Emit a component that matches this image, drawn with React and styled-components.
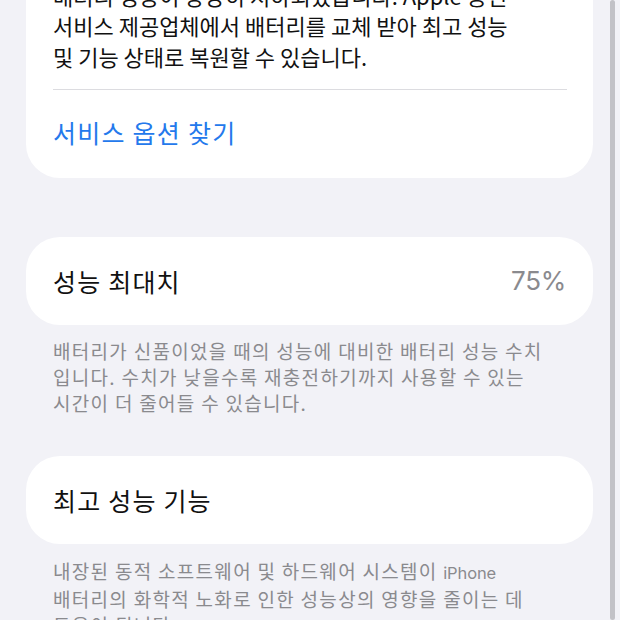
import React from "react";
import styled, { createGlobalStyle } from "styled-components";

const Global = createGlobalStyle`
  html, body {
    margin: 0;
    padding: 0;
    background: #f2f2f7;
    overflow: hidden;
  }
  body {
    font-family: "Noto Sans CJK KR", "Noto Sans", sans-serif;
    -webkit-font-smoothing: antialiased;
  }
`;

const Page = styled.div`
  position: relative;
  width: 620px;
  height: 620px;
  overflow: hidden;
`;

const Content = styled.div`
  display: flex;
  flex-direction: column;
  padding: 0 27px 0 26px;
  margin-top: -40px;
`;

const Card = styled.section`
  background: #ffffff;
  border-radius: 34px;
  display: flex;
  flex-direction: column;
  margin-top: ${(p) => p.$gap || 0}px;
`;

const CardText = styled.p`
  margin: 0;
  padding: 19.5px 26px 18.25px 27px;
  font-size: 22px;
  line-height: 30.5px;
  color: #111111;
  letter-spacing: 0;
`;

const Separator = styled.div`
  height: 1px;
  margin: 0 26px 0 27px;
  background: #dcdce0;
`;

const LinkRow = styled.div`
  height: 88px;
  display: flex;
  align-items: center;
  padding: 0 27px 4px 27px;
  box-sizing: border-box;
  font-size: 25px;
  letter-spacing: 1.25px;
  color: #2479ec;
`;

const Row = styled.div`
  height: 88px;
  display: flex;
  align-items: center;
  justify-content: space-between;
  padding: 0 27px;
  box-sizing: border-box;
`;

const RowLabel = styled.span`
  font-size: 25px;
  letter-spacing: 1.2px;
  color: #111111;
`;

const RowValue = styled.span`
  font-family: "Inter", "Noto Sans", sans-serif;
  font-size: 26px;
  color: #8a8a8e;
  letter-spacing: -0.3px;
`;

const Footer = styled.p`
  margin: 0;
  padding: 13.5px 27px 0 27px;
  font-size: 19px;
  line-height: 26px;
  letter-spacing: 1.3px;
  color: #8a8a8e;
`;

const Latin = styled.span`
  font-family: "Inter", "Noto Sans", sans-serif;
  font-size: 16.5px;
  letter-spacing: -0.1px;
`;

const ScrollIndicator = styled.div`
  position: absolute;
  top: 0;
  bottom: 0;
  right: 5px;
  width: 5px;
  border-radius: 3px;
  background: #c2c2c7;
`;

export default function App() {
  return (
    <Page>
      <Global />
      <Content>
        <Card>
          <CardText>
            배터리 성능이 상당히 저하되었습니다. Apple 공인
            <br />
            서비스 제공업체에서 배터리를 교체 받아 최고 성능
            <br />및 기능 상태로 복원할 수 있습니다.
          </CardText>
          <Separator />
          <LinkRow>서비스 옵션 찾기</LinkRow>
        </Card>

        <Card $gap={58.5}>
          <Row>
            <RowLabel>성능 최대치</RowLabel>
            <RowValue>75%</RowValue>
          </Row>
        </Card>
        <Footer>
          배터리가 신품이었을 때의 성능에 대비한 배터리 성능 수치
          <br />
          입니다. 수치가 낮을수록 재충전하기까지 사용할 수 있는
          <br />
          시간이 더 줄어들 수 있습니다.
        </Footer>

        <Card $gap={40}>
          <Row>
            <RowLabel>최고 성능 기능</RowLabel>
          </Row>
        </Card>
        <Footer>
          내장된 동적 소프트웨어 및 하드웨어 시스템이 <Latin>iPhone</Latin>
          <br />
          배터리의 화학적 노화로 인한 성능상의 영향을 줄이는 데
          <br />
          도움이 됩니다.
        </Footer>
      </Content>
      <ScrollIndicator />
    </Page>
  );
}
